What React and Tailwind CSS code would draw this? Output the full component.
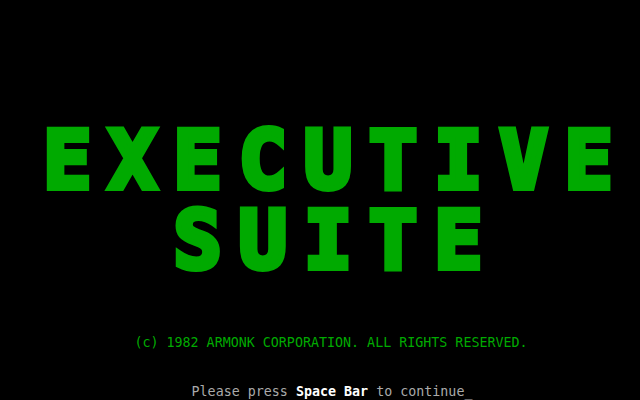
export default function App() {
  return (
    <div className="w-[640px] h-[400px] bg-black overflow-hidden flex flex-col items-center font-['DejaVu_Sans_Mono',monospace]">
      {/* Title */}
      <h1 className="mt-[121px] pl-[33px] flex flex-col items-center text-[80px] leading-[80px] font-bold tracking-[17px] text-[#00aa00] [-webkit-text-stroke:6px_#00aa00]">
        <span>EXECUTIVE</span>
        <span>SUITE</span>
      </h1>

      <p className="mt-[54px] pl-[22px] text-[13.33px] leading-[16px] text-[#00aa00] whitespace-pre">
        (c) 1982 ARMONK CORPORATION. ALL RIGHTS RESERVED.
      </p>

      <p className="mt-[33px] pl-[24px] text-[13.33px] leading-[16px] text-[#aaaaaa] whitespace-pre">
        Please press <span className="text-white font-bold">Space Bar</span> to continue_
      </p>
    </div>
  );
}
